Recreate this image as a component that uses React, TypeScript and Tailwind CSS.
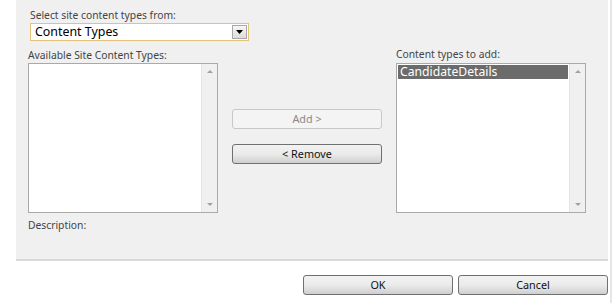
function ScrollArrows() {
  return (
    <div className="flex w-[16px] flex-col justify-between border-l border-[#e6e6e6] bg-[#f0f0f0] py-[4px]">
      <svg width="16" height="6" viewBox="0 0 16 6">
        <path d="M5 5 L8 2 L11 5 Z" fill="#a0a0a0" />
      </svg>
      <svg width="16" height="6" viewBox="0 0 16 6">
        <path d="M5 1 L8 4 L11 1 Z" fill="#a0a0a0" />
      </svg>
    </div>
  );
}

function ListBox({ items }: { items: string[] }) {
  return (
    <div className="flex h-[150px] w-[190px] border border-[#a9a9a9] bg-white">
      <div className="flex-1 p-[1px]">
        {items.map((item) => (
          <div
            key={item}
            className="h-[14px] bg-[#6b6b6b] pl-[2px] text-[12.2px] leading-[14px] text-white"
          >
            {item}
          </div>
        ))}
      </div>
      <ScrollArrows />
    </div>
  );
}

function Button({ label, disabled }: { label: string; disabled?: boolean }) {
  return (
    <button
      type="button"
      disabled={disabled}
      className={
        disabled
          ? "h-[20px] w-[150px] rounded-[3px] border border-[#c8c8c8] bg-[#f4f4f4] text-[10.8px] leading-[18px] text-[#8a8a8a]"
          : "h-[20px] w-[150px] rounded-[3px] border border-[#707070] bg-gradient-to-b from-[#f2f2f2] via-[#ebebeb] to-[#cfcfcf] text-[10.8px] leading-[18px] text-[#111]"
      }
    >
      {label}
    </button>
  );
}

export default function App() {
  return (
    <div
      className="h-[303px] w-[612px] overflow-hidden bg-white text-[#444]"
      style={{ fontFamily: '"Noto Sans", "Open Sans", sans-serif' }}
    >
      <div className="flex h-[303px]">
        <div className="flex w-[610px] flex-col">
          <div className="ml-[16px] h-[261px] w-[592px] border-b-2 border-[#d9d9d9] bg-[#f0f0f0] pl-[12px] pt-[8px]">
            <div className="ml-[2px] text-[10.3px] leading-[14px]">Select site content types from:</div>
            <div className="ml-[2px] mt-[1px] flex h-[18px] w-[219px] items-center border border-[#e3c27a] bg-white">
              <span className="flex-1 pl-[4px] text-[12.4px] leading-[16px] text-black">Content Types</span>
              <span className="mr-[1px] flex h-[14px] w-[15px] items-center justify-center border border-[#a8a8a8] bg-gradient-to-b from-[#f7f7f7] to-[#dcdcdc]">
                <svg width="7" height="4" viewBox="0 0 7 4">
                  <path d="M0 0 L7 0 L3.5 4 Z" fill="#000" />
                </svg>
              </span>
            </div>
            <div className="flex">
              <div className="w-[190px]">
                <div className="mt-[7px] h-[15px] text-[10.3px] leading-[14px]">Available Site Content Types:</div>
                <ListBox items={[]} />
                <div className="mt-[5px] text-[10.3px] leading-[14px]">Description:</div>
              </div>
              <div className="ml-[14px] flex w-[150px] flex-col gap-[15px] pt-[68px]">
                <Button label="Add >" disabled />
                <Button label="< Remove" />
              </div>
              <div className="ml-[14px] w-[190px]">
                <div className="mt-[6px] h-[16px] text-[10.3px] leading-[14px]">Content types to add:</div>
                <ListBox items={["CandidateDetails"]} />
              </div>
            </div>
          </div>
          <div className="ml-[303px] mt-[14px] flex gap-[5px]">
            <Button label="OK" />
            <Button label="Cancel" />
          </div>
        </div>
        <div className="w-[2px] bg-[#e6e6e6]" />
      </div>
    </div>
  );
}
